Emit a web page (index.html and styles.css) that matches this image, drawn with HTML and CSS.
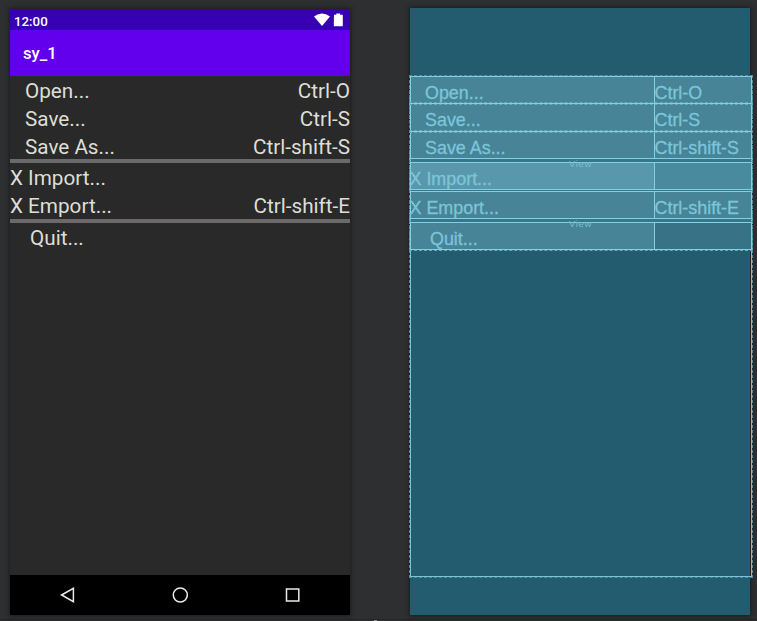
FILE: index.html
```html
<!DOCTYPE html>
<html lang="en">
<head>
<meta charset="utf-8">
<title>sy_1</title>
<link rel="stylesheet" href="styles.css">
</head>
<body>
<main class="surface">
  <section class="phone">
    <header class="status">
      <span>12:00</span>
      <svg class="status-icons" width="30" height="14" viewBox="0 0 30 14"><path d="M0 3.4Q8 -2.4 16 3.4L8 13Z" fill="#fff"/><path d="M20 1.7h2.3V.4h3.8v1.3h2.2q.5 0 .5.6v10.3q0 .6-.6.6h-7.8q-.6 0-.6-.6z" fill="#fff"/></svg>
    </header>
    <div class="appbar">sy_1</div>
    <div class="menu">
      <div class="item indent"><span>Open...</span><span>Ctrl-O</span></div>
      <div class="item indent"><span>Save...</span><span>Ctrl-S</span></div>
      <div class="item indent"><span>Save As...</span><span>Ctrl-shift-S</span></div>
      <div class="rule"></div>
      <div class="item"><span>X Import...</span></div>
      <div class="item"><span>X Emport...</span><span>Ctrl-shift-E</span></div>
      <div class="rule"></div>
      <div class="item deep"><span>Quit...</span></div>
    </div>
    <footer class="nav">
      <svg width="16" height="16" viewBox="0 0 16 16"><path d="M2.6 8 14.4 1.4v13.2z"/></svg>
      <svg width="16" height="16" viewBox="0 0 16 16"><circle cx="8.3" cy="8" r="7"/></svg>
      <svg width="16" height="16" viewBox="0 0 16 16"><path d="M1.5 2h12.3v12H1.5z"/></svg>
    </footer>
  </section>
  <section class="blueprint">
    <div class="frame">
      <div class="row r1"><span class="indent">Open...</span><span>Ctrl-O</span></div>
      <div class="row r2"><span class="indent">Save...</span><span>Ctrl-S</span></div>
      <div class="row r1"><span class="indent">Save As...</span><span>Ctrl-shift-S</span></div>
      <div class="gap"><small>View</small></div>
      <div class="row r1 light"><span>X Import...</span><span></span></div>
      <div class="gap thin"></div>
      <div class="row r1"><span>X Emport...</span><span>Ctrl-shift-E</span></div>
      <div class="gap"><small>View</small></div>
      <div class="row r1 last"><span class="deep">Quit...</span><span></span></div>
    </div>
  </section>
</main>
<div class="handle"></div>
</body>
</html>
```
FILE: styles.css
```css
* { box-sizing: border-box; }
body { margin: 0; width: 757px; height: 621px; overflow: hidden; background: #2d2f31; }
.surface { display: flex; gap: 60px; padding: 8px 0 0 10px; height: 620px; border-bottom: 1px solid #242628; }
.phone { width: 340px; height: 606px; margin-top: 1px; background: #292929; display: flex; flex-direction: column; font-family: Roboto, sans-serif; box-shadow: 0 0 4px 1px #1c1d1e; }
.status { height: 21px; background: #3700b3; color: #fff; display: flex; justify-content: space-between; padding: 4px 6px 0 4px; font: 500 13.3px/18px Roboto, sans-serif; }
.appbar { height: 46px; background: #6200ee; color: #fff; padding-left: 13px; font: 500 16.7px/47px Roboto, sans-serif; }
.menu { flex: 1; color: #deded6; font-size: 20.7px; }
.item { height: 27.8px; line-height: 30.5px; display: flex; justify-content: space-between; white-space: pre; }
.item.indent { padding-left: 15px; }
.item.deep { padding-left: 20px; }
.rule { height: 4px; background: #6b6969; }
.nav { height: 40px; background: #000; display: flex; justify-content: space-around; align-items: center; }
.nav svg { fill: none; stroke: #e9e9e9; stroke-width: 1.5; }
.blueprint { width: 340px; height: 607px; padding-top: 68px; background: #235c6f; box-shadow: 0 0 4px 1px #1c1d1e; }
.frame { width: 342px; height: 501px; border: 1px solid #7ac3d8; outline: 1px dashed #518b9d; font: 17.9px/28px "Liberation Sans", sans-serif; color: #7cc5d9; }
.row { display: grid; grid-template-columns: 245px 98px; width: 342px; height: 28px; margin: 0 -1px; background: #478498; border: 1px solid #84cfe2; outline: 1px dashed #64a9bc; white-space: pre; line-height: 33px; -webkit-text-stroke: .3px #7cc5d9; }
.row:first-child { margin-top: -1px; }
.row > span { height: 26px; text-indent: -1.5px; }
.row > span:first-child { width: 244px; border-right: 1px solid #84cfe2; }
.row > .indent { padding-left: 15.5px; }
.row > .deep { padding-left: 20.5px; }
.r2 { height: 29px; margin-top: -1px; line-height: 32px; }
.r2 + .r1 { margin-top: -1px; }
.r2 > span { height: 27px; }
.light { background: #498a9e; }
.light > span:first-child { background: #5998ac; }
.last { background: linear-gradient(90deg, #478498 244px, #387286 244px); }
.gap { position: relative; height: 3px; background: #35778b; }
.gap.thin { height: 1px; }
.gap small { position: absolute; z-index: 1; left: 158px; top: 0; font-size: 9.6px; line-height: 10px; letter-spacing: .6px; color: #77bed1; }
.handle { width: 3px; height: 1px; margin-left: 374px; background: #898b8d; }
```
